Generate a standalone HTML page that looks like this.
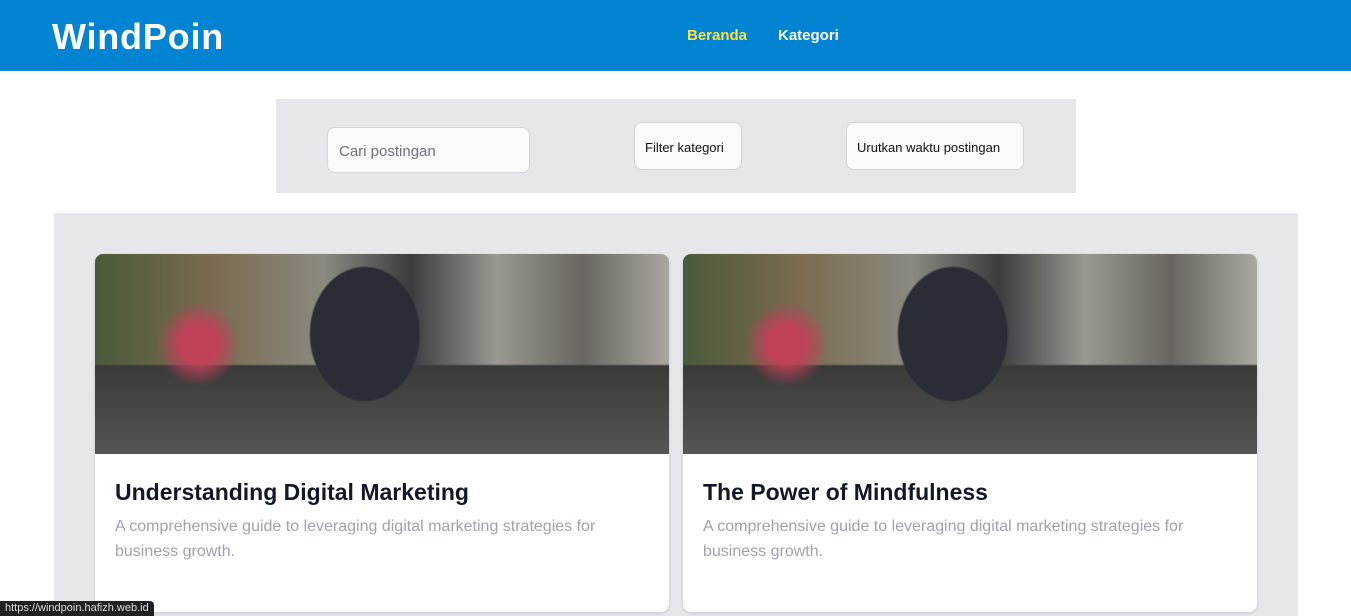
<!DOCTYPE html>
<html><head><meta charset="utf-8"><style>
*{margin:0;padding:0;box-sizing:border-box}
body{width:1351px;height:616px;overflow:hidden;background:#fff;font-family:"Liberation Sans",sans-serif;position:relative}
.nav{height:71px;background:#0284d2;position:relative}
.logo{position:absolute;left:52px;top:16px;color:#fff;font-weight:bold;font-size:36px;letter-spacing:0.8px}
.nav a{position:absolute;top:27px;font-weight:bold;font-size:15px}
.filter{position:absolute;left:276px;top:99px;width:800px;height:94px;background:#e5e7eb}
.box{position:absolute;background:#f9fafb;border:1px solid #d1d5db;border-radius:8px;font-size:13px;color:#111}
.main{position:absolute;left:54px;top:213px;width:1244px;height:403px;background:#e5e7eb}
.card{position:absolute;top:41px;width:574px;height:358px;background:#fff;border-radius:8px;overflow:hidden;box-shadow:0 1px 3px rgba(0,0,0,.15)}
.img{height:200px;background:
radial-gradient(ellipse 90px 110px at 47% 40%,#2a2d35 60%,transparent 62%),
radial-gradient(ellipse 60px 60px at 18% 45%,#c0405a 30%,transparent 70%),
linear-gradient(180deg,transparent 55%,#3a3a38 56%,#555 100%),
linear-gradient(90deg,#4a5a3a 0%,#7a6a50 20%,#8a8a80 40%,#3a3c40 55%,#9a9890 70%,#6a6560 85%,#a9a8a0 100%)}
.card h2{margin:25px 20px 0;font-size:23px;color:#111827}
.card p{margin:8px 20px 0;font-size:16px;line-height:25px;color:#9ca3af}
.status{position:absolute;left:0;bottom:0;height:15px;padding:1px 5px;background:#202124;color:#ddd;font-size:11px;border-top-right-radius:4px}
</style></head><body>
<div class="nav"><div class="logo">WindPoin</div>
<a style="left:687px;color:#fde047">Beranda</a><a style="left:778px;color:#fff">Kategori</a></div>
<div class="filter">
<div class="box" style="left:51px;top:28px;width:203px;height:46px;padding:15px 11px;font-size:15px;color:#6b7280">Cari postingan</div>
<div class="box" style="left:358px;top:23px;width:108px;height:48px;padding:17px 10px">Filter kategori</div>
<div class="box" style="left:570px;top:23px;width:178px;height:48px;padding:17px 10px">Urutkan waktu postingan</div>
</div>
<div class="main">
<div class="card" style="left:41px"><div class="img"></div><h2>Understanding Digital Marketing</h2><p>A comprehensive guide to leveraging digital marketing strategies for business growth.</p></div>
<div class="card" style="left:629px"><div class="img"></div><h2>The Power of Mindfulness</h2><p>A comprehensive guide to leveraging digital marketing strategies for business growth.</p></div>
</div>
<div class="status">https://windpoin.hafizh.web.id</div>
</body></html>
